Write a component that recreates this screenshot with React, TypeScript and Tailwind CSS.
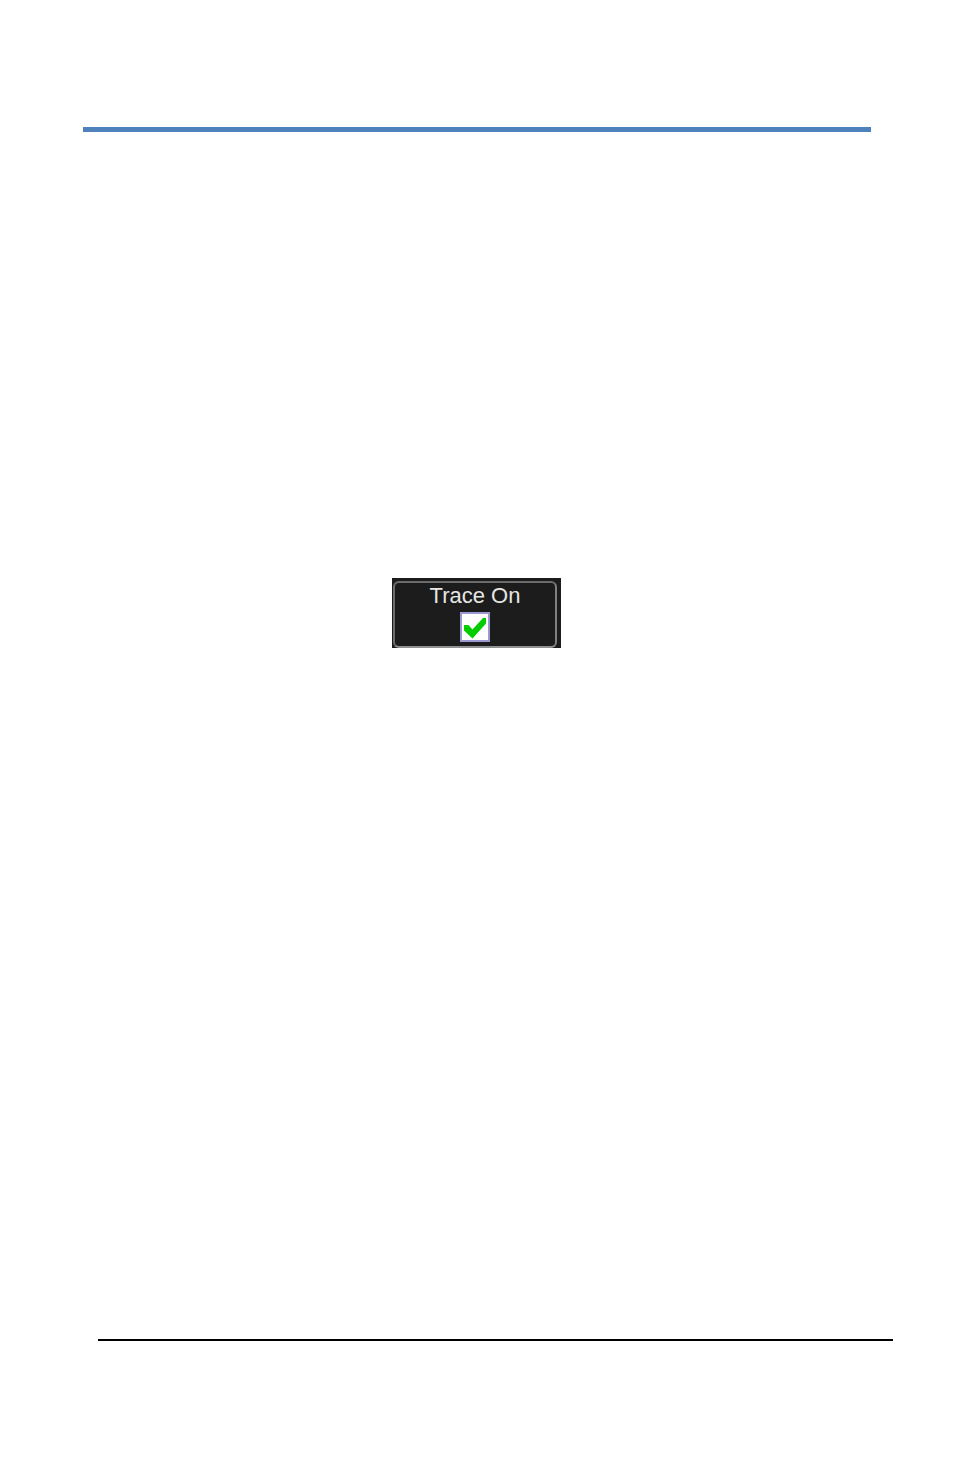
import React, { useState } from 'react';

interface TraceToggleProps {
  label: string;
  checked: boolean;
  onChange: (checked: boolean) => void;
}

function TraceToggle({ label, checked, onChange }: TraceToggleProps) {
  return (
    <div className="w-[169px] bg-[#1c1c1c] pt-[3px] pr-1 pl-px">
      <label className="flex h-[67px] cursor-pointer flex-col items-center gap-1 rounded-md border-2 border-t-[#6c6c6c] border-r-[#808080] border-b-[#8f9191] border-l-[#6c6c6c] pt-px font-['Liberation_Sans',Arial,sans-serif] text-[22px] leading-6 text-[#e6e6e6]">
        <span>{label}</span>
        <span className="relative size-[30px]">
          <input
            type="checkbox"
            checked={checked}
            onChange={(e) => onChange(e.target.checked)}
            className="block size-[30px] cursor-pointer appearance-none border-2 border-[#9a9ad0] bg-white"
          />
          {checked && (
            <svg
              className="pointer-events-none absolute inset-0 size-[30px]"
              viewBox="0 0 30 30"
              fill="#00cc00"
              aria-hidden="true"
            >
              <path d="M4 13h4.5l4 4.5L23 6h3v5.5L12.500 26.500 4 18.500z" />
            </svg>
          )}
        </span>
      </label>
    </div>
  );
}

export default function App() {
  const [traceOn, setTraceOn] = useState(true);

  return (
    <div className="flex min-h-screen flex-col bg-white">
      {/* Header rule */}
      <header className="pt-[127px] pr-[83px] pl-[83px]">
        <div className="h-[5px] bg-[#4f81bd]" />
      </header>

      {/* Content */}
      <main className="flex flex-1 items-start justify-center pt-[446px] pr-[84px] pl-[83px]">
        <TraceToggle label="Trace On" checked={traceOn} onChange={setTraceOn} />
      </main>

      {/* Footer rule */}
      <footer className="pr-[61px] pb-[133px] pl-[98px]">
        <div className="h-0.5 bg-black" />
      </footer>
    </div>
  );
}
